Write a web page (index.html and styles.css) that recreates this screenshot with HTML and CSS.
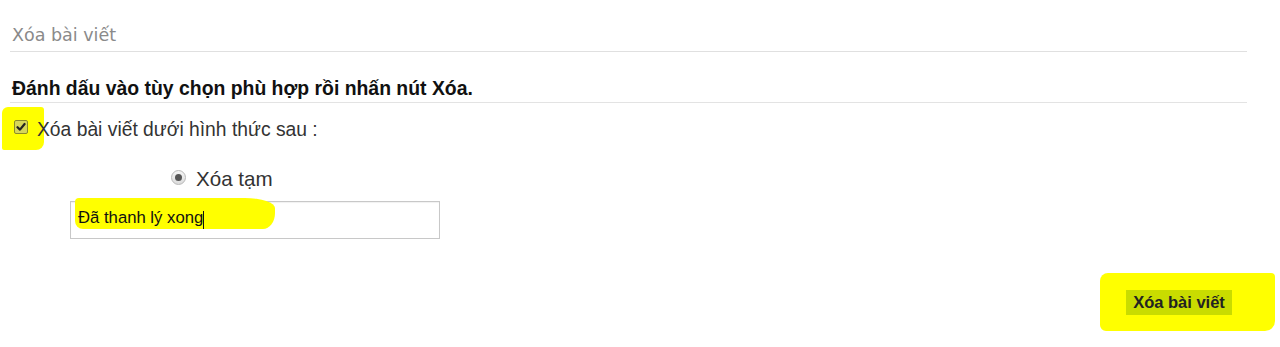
FILE: index.html
```html
<!DOCTYPE html>
<html lang="vi">
<head>
<meta charset="utf-8">
<title>Xóa bài viết</title>
<link rel="stylesheet" href="styles.css">
</head>
<body>
<div class="page">
  <div class="title">Xóa bài viết</div>
  <div class="heading">Đánh dấu vào tùy chọn phù hợp rồi nhấn nút Xóa.</div>
  <div class="check-row">
    <span class="mark mark-check"></span>
    <span class="checkbox"><svg width="10" height="10" viewBox="0 0 10 10"><path d="M1.5 5.2 L4 7.6 L8.6 2" fill="none" stroke="#222" stroke-width="2.2" stroke-linecap="round" stroke-linejoin="round"/></svg></span>
    <span class="check-label">Xóa bài viết dưới hình thức sau :</span>
  </div>
  <div class="radio-row">
    <span class="radio"><span class="radio-dot"></span></span>
    <span class="radio-label">Xóa tạm</span>
  </div>
  <div class="input-row">
    <div class="input">
      <span class="mark mark-input"></span>
      <span class="input-text">Đã thanh lý xong</span><span class="caret"></span>
    </div>
  </div>
  <div class="actions">
    <div class="btn-wrap">
      <span class="mark mark-btn"></span>
      <button class="btn">Xóa bài viết</button>
    </div>
  </div>
</div>
</body>
</html>
```

FILE: styles.css
```css
* { box-sizing: border-box; }
html, body { margin: 0; padding: 0; background: #fff; }
body { font-family: "Liberation Sans", Arial, sans-serif; color: #333; min-height: 347px; }
.page { width: 1247px; padding: 0 0 0 10px; }
.title {
  font-family: "DejaVu Sans", Verdana, sans-serif;
  font-size: 17.5px;
  color: #8a8a8a;
  padding: 24px 0 0 2px;
  height: 52px;
  line-height: 22px;
  border-bottom: 1px solid #e0e0e0;
}
.heading {
  font-size: 19.4px;
  font-weight: bold;
  color: #111;
  padding: 25px 0 0 2px;
  height: 51px;
  line-height: 22px;
  border-bottom: 1px solid #e3e3e3;
}
.check-row {
  position: relative;
  display: flex;
  align-items: center;
  height: 54px;
  padding: 0 0 4px 4px;
}
.checkbox {
  position: relative;
  width: 14px; height: 14px;
  border: 1px solid #8a8a2a;
  border-radius: 2px;
  background: #d6d65a;
  display: flex; align-items: center; justify-content: center;
  margin-right: 9px;
  top: -1px;
}
.check-label { position: relative; font-size: 19.3px; color: #333; top: 2px; }
.radio-row {
  display: flex;
  align-items: center;
  height: 30px;
  padding-left: 161px;
  margin-top: 7px;
  margin-bottom: 2px;
}
.radio {
  width: 15px; height: 15px;
  border-radius: 50%;
  border: 1px solid #b8b8b8;
  background: linear-gradient(#f4f4f4, #dcdcdc);
  display: flex; align-items: center; justify-content: center;
  margin-right: 10px;
  position: relative; top: -2px;
}
.radio-dot { width: 7px; height: 7px; border-radius: 50%; background: #555; }
.radio-label { font-size: 20.6px; color: #333; }
.input-row { padding: 5px 0 0 60px; height: 88px; }
.input {
  position: relative;
  width: 370px; height: 38px;
  border: 1px solid #c8c8c8;
  display: flex; align-items: center;
  padding-left: 7px;
  box-shadow: inset 0 1px 1px rgba(0,0,0,0.06);
}
.input-text { position: relative; font-size: 16.7px; color: #111; top: -2px; }
.caret { position: relative; width: 1px; height: 18px; background: #111; top: 0; }
.actions { display: flex; justify-content: flex-end; padding: 6px 15px 0 0; }
.btn-wrap { position: relative; }
.btn {
  position: relative;
  display: block;
  background: #c9dc00;
  border: none;
  font-family: "Liberation Sans", Arial, sans-serif;
  font-weight: bold;
  font-size: 16.5px;
  color: #222;
  width: 106px; height: 25px;
  padding: 0;
}
.mark { position: absolute; background: #ffff00; }
.mark-check { left: -8px; top: 4px; width: 42px; height: 43px; border-radius: 6px 3px 8px 2px; }
.mark-input { left: 4px; top: -4px; width: 200px; height: 31px; border-radius: 4px 30px 12px 8px / 4px 10px 16px 8px; }
.mark-btn { left: -26px; top: -17px; width: 175px; height: 58px; border-radius: 8px 4px 10px 6px; }
```
